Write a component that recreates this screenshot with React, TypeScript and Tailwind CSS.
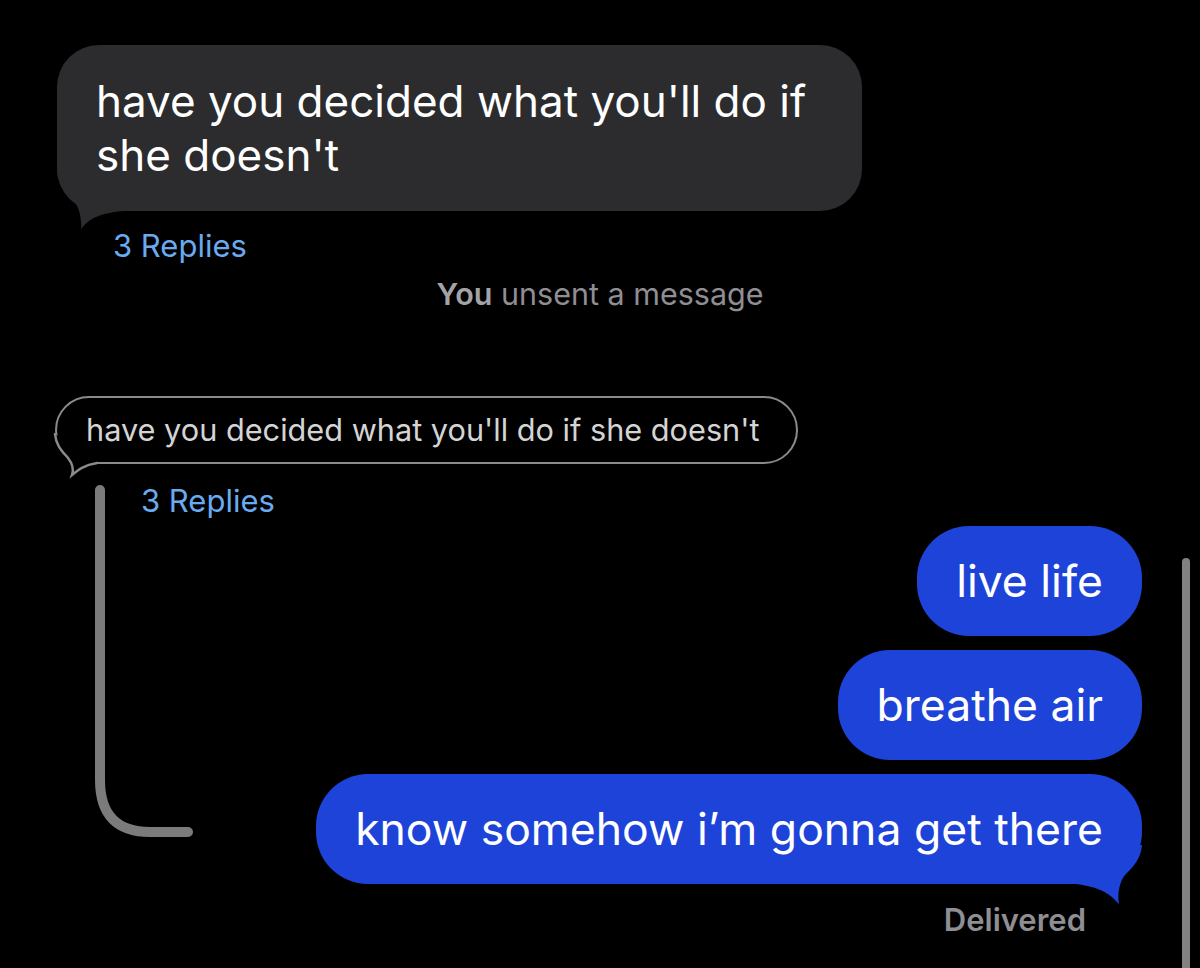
import React from 'react';

const font = { fontFamily: 'Inter, "Noto Sans", sans-serif' };

function LeftTail({ color }: { color: string }) {
  return (
    <svg className="absolute left-0 bottom-[-20px]" width="70" height="60" viewBox="0 0 70 60">
      <path d="M0 0 C1 14 9 22 17 30 C22 36 25 48 24 58 C30 51 36 43 66 40 L66 0 Z" fill={color} />
    </svg>
  );
}

function RightTail({ color }: { color: string }) {
  return (
    <svg className="absolute right-0 bottom-[-21px]" width="70" height="60" viewBox="0 0 70 60">
      <path d="M70 0 C69 14 61 22 53 30 C48 36 45 48 47 59 C40 52 34 43 4 39 L4 0 Z" fill={color} />
    </svg>
  );
}

function OutlineTail() {
  return (
    <svg className="absolute left-[-2px] bottom-[-16px]" width="54" height="48" viewBox="0 0 54 48">
      <path
        d="M2 2 C3 14 10 20 15 26 C19 31 21 37 19 43 C25 38 31 33 44 31"
        fill="#000"
        stroke="#8a8a8a"
        strokeWidth="2.5"
        strokeLinecap="round"
      />
    </svg>
  );
}

export default function App() {
  return (
    <div className="relative h-[968px] w-[1200px] overflow-hidden bg-black" style={font}>
      {/* scrollbar */}
      <div className="absolute right-[10px] top-[558px] bottom-0 w-[8px] rounded-t-full bg-[#828282]" />

      <div className="flex flex-col pt-[45px]">
        <div className="ml-[57px] relative w-[805px]">
          <div className="rounded-[42px] bg-[#2c2c2e] px-[39px] py-[29px] text-[44px] leading-[54px] text-white">
            have you decided what you'll do if she doesn't
          </div>
          <LeftTail color="#2c2c2e" />
        </div>

        <div className="ml-[113px] mt-[18px] text-[31px] leading-[34px] text-[#6aaaf0]">3 Replies</div>

        <div className="mt-[14px] text-center text-[30.5px] leading-[34px] text-[#8e8e93]">
          <span className="font-semibold text-[#a3a3a8]">You</span> unsent a message
        </div>

        <div className="ml-[55px] mt-[85px] relative w-fit">
          <div className="rounded-[35px] border-[2.5px] border-[#8a8a8a] pl-[29px] pr-[37px] py-[15px] text-[30.7px] leading-[34px] text-[#d4d4d4]">
            have you decided what you'll do if she doesn't
          </div>
          <OutlineTail />
        </div>

        <div className="relative mt-[20px]">
          <svg className="absolute left-0 top-0" width="200" height="360" viewBox="0 0 200 360">
            <path d="M100 6 L100 296 Q100 348 150 348 L188 348" fill="none" stroke="#7b7b7b" strokeWidth="10" strokeLinecap="round" />
          </svg>

          <div className="ml-[141px] text-[31px] leading-[34px] text-[#6aaaf0]">3 Replies</div>

          <div className="mt-[8px] flex flex-col items-end gap-[14px] pr-[58px]">
            <div className="rounded-[52px] bg-[#1d43d8] px-[39px] py-[27px] text-[44.5px] leading-[56px] text-white">live life</div>
            <div className="rounded-[52px] bg-[#1d43d8] px-[39px] py-[27px] text-[44.5px] leading-[56px] text-white">breathe air</div>
            <div className="relative">
              <div className="rounded-[52px] bg-[#1d43d8] px-[39px] py-[27px] text-[44.5px] leading-[56px] text-white">
                know somehow i’m gonna get there
              </div>
              <RightTail color="#1d43d8" />
            </div>
          </div>

          <div className="mt-[19px] pr-[114px] text-right text-[31px] font-semibold leading-[34px] text-[#8e8e93]">Delivered</div>
        </div>
      </div>
    </div>
  );
}
